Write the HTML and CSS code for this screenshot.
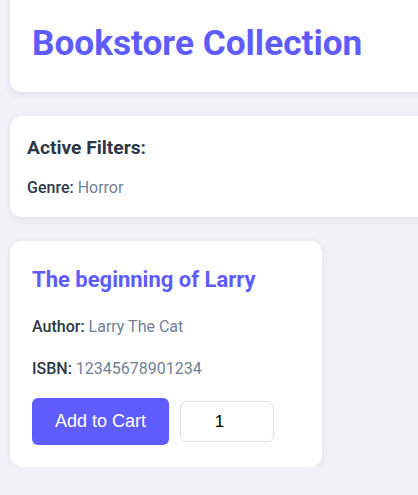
FILE: index.html
```html
<!DOCTYPE html>
<html>
<head>
<meta charset="utf-8">
<link rel="stylesheet" href="styles.css">
</head>
<body>
<div class="page">
  <header class="card header">
    <h1 class="title">Bookstore Collection</h1>
  </header>
  <section class="card filters">
    <h2 class="filters-title">Active Filters:</h2>
    <p class="meta"><span class="label">Genre:</span> Horror</p>
  </section>
  <div class="grid">
    <article class="card book">
      <h3 class="book-title">The beginning of Larry</h3>
      <p class="meta author"><span class="label">Author:</span> Larry The Cat</p>
      <p class="meta isbn"><span class="label">ISBN:</span> 12345678901234</p>
      <div class="actions">
        <button class="btn">Add to Cart</button>
        <input class="qty" type="number" value="1">
      </div>
    </article>
  </div>
</div>
</body>
</html>
```

FILE: styles.css
```css
html, body {
  margin: 0;
  padding: 0;
  background: #f0f2f7;
  overflow: hidden;
}
body {
  font-family: Roboto, "Liberation Sans", sans-serif;
  color: #2d3748;
}
.page {
  width: 520px;
  padding: 0 10px;
  display: flex;
  flex-direction: column;
  gap: 24px;
}
.card {
  background: #fff;
  border-radius: 12px;
  box-shadow: 0 2px 8px rgba(30, 40, 80, 0.08);
}
.header {
  margin-top: -20px;
  padding: 42px 22px 28px;
}
.title {
  margin: 0;
  font-size: 35.2px;
  font-weight: 700;
  color: #5e5cff;
  line-height: 42px;
}
.filters {
  padding: 20px 17px 16px;
}
.filters-title {
  margin: 0 0 15px;
  font-size: 19.2px;
  font-weight: 700;
  color: #2d3748;
  line-height: 24px;
}
.meta {
  margin: 0;
  font-size: 16px;
  line-height: 25.6px;
  color: #718096;
}
.label {
  color: #2d3748;
  font-weight: 500;
}
.grid {
  display: grid;
  grid-template-columns: 312px;
}
.book {
  padding: 24px 22px 22px;
  display: flex;
  flex-direction: column;
}
.book-title {
  margin: 2px 0 0;
  font-size: 22px;
  font-weight: 700;
  color: #5e5cff;
  line-height: 26.4px;
}
.author {
  margin-top: 21px;
}
.isbn {
  margin-top: 16px;
}
.actions {
  margin-top: 17px;
  display: flex;
  align-items: center;
  gap: 11px;
}
.btn {
  background: #5e5cff;
  color: #fff;
  border: none;
  border-radius: 6px;
  font-family: "Liberation Sans", Arial, sans-serif;
  font-size: 18px;
  width: 137px;
  height: 47px;
}
.qty {
  width: 94px;
  height: 41px;
  box-sizing: border-box;
  border: 1px solid #dde3ee;
  border-radius: 6px;
  text-align: center;
  font-family: "Liberation Sans", Arial, sans-serif;
  font-size: 17px;
  color: #000;
  padding: 0;
}
```
